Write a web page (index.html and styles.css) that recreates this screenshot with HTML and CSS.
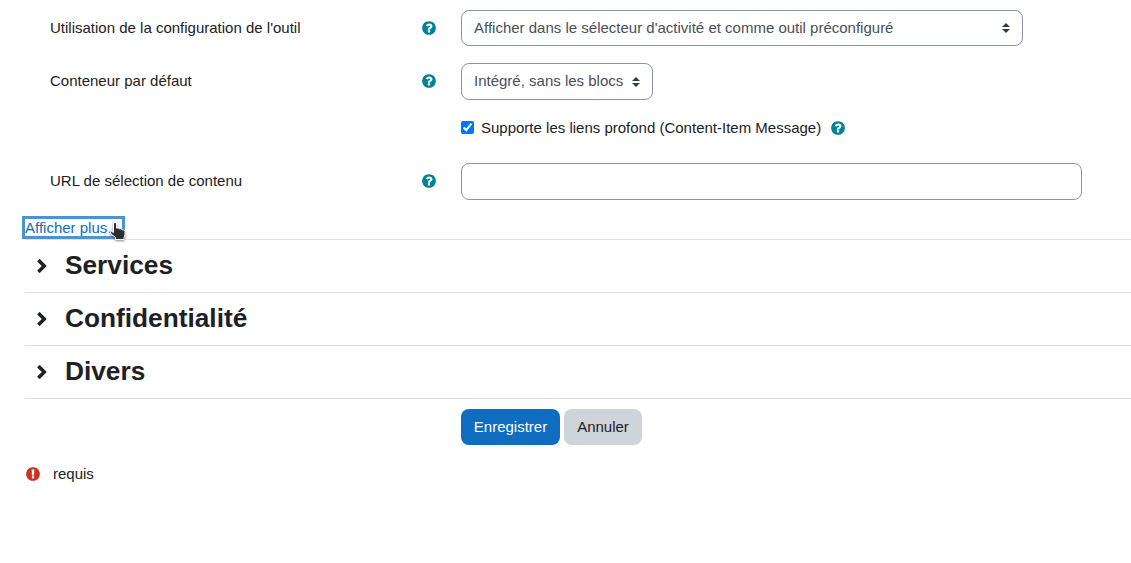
FILE: index.html
```html
<!DOCTYPE html>
<html lang="fr">
<head>
<meta charset="utf-8">
<title>Configuration de l'outil</title>
<link rel="stylesheet" href="styles.css">
</head>
<body>
<svg class="defs" width="0" height="0">
  <symbol id="help" viewBox="0 0 1792 1792"><path d="M1024 1376v-192q0-14-9-23t-23-9h-192q-14 0-23 9t-9 23v192q0 14 9 23t23 9h192q14 0 23-9t9-23zm256-672q0-88-55.500-163t-138.500-116-170-41q-243 0-371 213-15 24 8 42l132 100q7 6 19 6 16 0 25-12 53-68 86-92 34-24 86-24 48 0 85.500 26t37.500 59q0 38-20 61t-68 45q-63 28-115.500 86.500t-52.500 125.500v36q0 14 9 23t23 9h192q14 0 23-9t9-23q0-19 21.500-49.500t54.500-49.500q32-18 49-28.500t46-35 44.500-48 28-60.500 12.500-81zm384 192q0 209-103 385.500t-279.500 279.500-385.500 103-385.500-103-279.500-279.500-103-385.500 103-385.500 279.500-279.500 385.500-103 385.500 103 279.500 279.500 103 385.500z"/></symbol>
  <symbol id="required" viewBox="0 0 1792 1792"><path d="M896 128q209 0 385.500 103t279.500 279.500 103 385.500-103 385.500-279.500 279.500-385.500 103-385.500-103-279.500-279.500-103-385.500 103-385.500 279.500-279.500 385.500-103zm128 1247v-190q0-14-9-23.500t-22-9.500h-192q-13 0-23 10t-10 23v190q0 13 10 23t23 10h192q13 0 22-9.500t9-23.500zm-2-344l18-621q0-12-10-18-10-8-24-8h-220q-14 0-24 8-10 6-10 18l17 621q0 10 10 17.500t24 7.500h185q14 0 23.500-7.500t10.500-17.500z"/></symbol>
  <symbol id="chevron" viewBox="0 0 16 16"><path d="M3.500 2.900 5.200 1.200Q5.600.9 6 1.200L12.300 7.500Q12.700 8 12.300 8.500L6 14.800Q5.600 15.100 5.200 14.800L3.500 13.100Q3.200 12.700 3.500 12.300L7.800 8 3.500 3.700Q3.200 3.300 3.500 2.900Z"/></symbol>
  <symbol id="sort" viewBox="0 0 4 5"><path d="M2 0 0 2h4zm0 5L0 3h4z"/></symbol>
</svg>
<form class="form">
  <div class="row">
    <label>Utilisation de la configuration de l'outil</label>
    <svg class="icon help"><use href="#help"/></svg>
    <div class="control select wide"><span>Afficher dans le sélecteur d'activité et comme outil préconfiguré</span><svg class="sort"><use href="#sort"/></svg></div>
  </div>
  <div class="row">
    <label>Conteneur par défaut</label>
    <svg class="icon help"><use href="#help"/></svg>
    <div class="control select narrow"><span>Intégré, sans les blocs</span><svg class="sort"><use href="#sort"/></svg></div>
  </div>
  <div class="row check-row">
    <div class="check">
      <input type="checkbox" class="box" id="deep" checked>
      <label for="deep">Supporte les liens profond (Content-Item Message)</label>
      <svg class="icon help"><use href="#help"/></svg>
    </div>
  </div>
  <div class="row">
    <label>URL de sélection de contenu</label>
    <svg class="icon help"><use href="#help"/></svg>
    <input type="text" class="control url">
  </div>
  <div class="more"><a class="more-link">Afficher plus…</a>
    <svg class="pointer" viewBox="0 0 18 20"><path d="M4.500 3Q4.500 1.400 6 1.400Q7.600 1.400 7.600 3V7.200L9 6.800 10.500 7.800 12 7.600 13.300 8.800 15.300 9 16 10.200V14L15 16.500V18.500H6.500V16.500L2 13Q.6 10.600 2.600 10.500L4.500 11.500Z"/></svg>
  </div>
  <section class="section"><svg class="icon"><use href="#chevron"/></svg><h3>Services</h3></section>
  <section class="section"><svg class="icon"><use href="#chevron"/></svg><h3>Confidentialité</h3></section>
  <section class="section"><svg class="icon"><use href="#chevron"/></svg><h3>Divers</h3></section>
  <div class="actions">
    <button type="button" class="btn primary">Enregistrer</button>
    <button type="button" class="btn secondary">Annuler</button>
  </div>
  <div class="legend"><svg class="icon danger"><use href="#required"/></svg><span>requis</span></div>
</form>
</body>
</html>
```
FILE: styles.css
```css
* { box-sizing: border-box; }
body {
  margin: 0;
  background: #fff;
  color: #1d2125;
  font: 15px/22px "Liberation Sans", Arial, sans-serif;
  overflow: hidden;
}
.defs { display: block; }
.form { padding: 10px 0 0 25px; }
.row {
  display: grid;
  grid-template-columns: 371px 40px 1fr;
  grid-template-rows: 36px;
  align-items: center;
  height: 36px;
  margin: 0 0 17px 25px;
}
.row > label { padding-bottom: 1px; }
.icon { display: block; width: 16px; height: 16px; fill: #1d2125; flex: none; }
.help { fill: #008196; }
.control {
  height: 37px;
  border: 1px solid #8f959e;
  border-radius: 8px;
  background: #fff;
  color: #495057;
  align-self: start;
}
.select { display: flex; align-items: center; justify-content: space-between; padding: 0 12px; }
.select span { padding-bottom: 1px; }
.wide { width: 562px; height: 36px; }
.narrow { width: 192px; }
.sort { width: 8px; height: 10px; fill: #343a40; }
.url { width: 621px; }
.check-row { grid-template-rows: 24px; height: 24px; margin-bottom: 23px; }
.check { grid-column: 3; display: flex; align-items: center; }
.box { width: 13px; height: 13px; margin: 0 7px 2px 0; }
.check .help { margin-left: 9px; }
.more { position: relative; height: 23px; padding-top: 3px; }
.more-link {
  display: block;
  width: 97px;
  height: 17px;
  line-height: 18px;
  white-space: nowrap;
  color: #0f6cbf;
  outline: 3px solid #4b93d1;
}
.pointer {
  position: absolute;
  left: 84px;
  top: 5px;
  width: 18px;
  height: 20px;
  fill: #2e2e2e;
  stroke: #fff;
  stroke-width: 1;
  filter: drop-shadow(0 1px 1px #0007);
}
.section { display: flex; align-items: center; height: 53px; padding-left: 9px; border-top: 1px solid #dee2e6; }
.section h3 { margin: 0 0 2px 15px; font-size: 26.25px; line-height: 32px; }
.actions { display: flex; gap: 4px; padding: 10px 0 0 436px; border-top: 1px solid #dee2e6; }
.btn { height: 36px; padding: 0; border: 0; border-radius: 8px; font: inherit; }
.primary { width: 99px; background: #0f6cbf; color: #fff; }
.secondary { width: 78px; background: #ced4da; color: #1d2125; }
.legend { display: flex; align-items: center; gap: 12px; margin-top: 18px; }
.danger { fill: #ca3120; margin-bottom: 1px; }
```
